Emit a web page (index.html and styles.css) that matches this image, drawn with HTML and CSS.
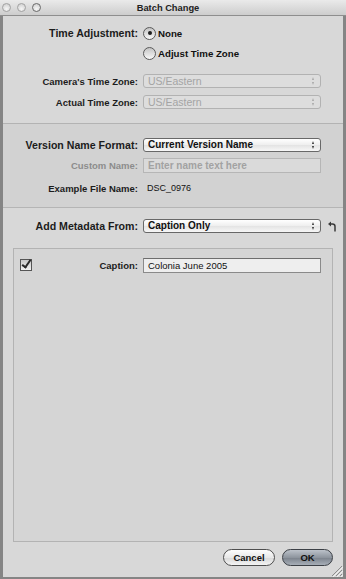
FILE: index.html
```html
<!DOCTYPE html>
<html lang="en">
<head>
    <meta charset="UTF-8">
    <meta name="viewport" content="width=device-width, initial-scale=1.0">
    <title>Batch Change</title>
    <link rel="stylesheet" href="styles.css">
</head>
<body>
    <div class="window">
        <div class="titlebar">
            <div class="lights">
                <span class="light"></span>
                <span class="light"></span>
                <span class="light light-zoom"></span>
            </div>
            <div class="title">Batch Change</div>
        </div>

        <div class="section section-time">
            <div class="row row-big">
                <div class="label">Time Adjustment:</div>
                <label class="radio"><span class="radio-dot on"></span>None</label>
            </div>
            <div class="row row-big row-radio2">
                <div class="label"></div>
                <label class="radio"><span class="radio-dot"></span>Adjust Time Zone</label>
            </div>
            <div class="row row-small row-camera">
                <div class="label">Camera's Time Zone:</div>
                <div class="popup disabled">US/Eastern<span class="arrows"></span></div>
            </div>
            <div class="row row-small row-actual">
                <div class="label">Actual Time Zone:</div>
                <div class="popup disabled">US/Eastern<span class="arrows"></span></div>
            </div>
        </div>

        <div class="section section-name">
            <div class="row row-big">
                <div class="label">Version Name Format:</div>
                <div class="popup">Current Version Name<span class="arrows"></span></div>
            </div>
            <div class="row row-small row-custom">
                <div class="label dim">Custom Name:</div>
                <div class="field disabled">Enter name text here</div>
            </div>
            <div class="row row-small row-example">
                <div class="label">Example File Name:</div>
                <div class="value">DSC_0976</div>
            </div>
        </div>

        <div class="section section-meta">
            <div class="row row-big">
                <div class="label">Add Metadata From:</div>
                <div class="popup">Caption Only<span class="arrows"></span></div>
                <svg class="revert" width="8" height="11" viewBox="0 0 8 11">
                    <path d="M3 0.5 L0 3 L3 5.5 Z" fill="#3a3a3a"/>
                    <path d="M2.5 3 H4.5 Q7 3 7 5.5 V10.5" fill="none" stroke="#3a3a3a" stroke-width="1.5"/>
                </svg>
            </div>
            <div class="box">
                <div class="row row-small row-caption">
                    <div class="label label-check"><span class="check"></span>Caption:</div>
                    <div class="field">Colonia June 2005</div>
                </div>
            </div>
            <div class="buttons">
                <button class="btn btn-cancel">Cancel</button>
                <button class="btn btn-default">OK</button>
            </div>
            <svg class="grip" width="12" height="12" viewBox="0 0 12 12">
                <path d="M11 1 L1 11 M11 5 L5 11 M11 9 L9 11" stroke="#8c8c8c" stroke-width="1"/>
                <path d="M12 2 L2 12 M12 6 L6 12 M12 10 L10 12" stroke="#f0f0f0" stroke-width="1"/>
            </svg>
        </div>
    </div>
</body>
</html>
```

FILE: styles.css
```css
html, body {
    margin: 0;
    padding: 0;
}
body {
    font-family: "Liberation Sans", Arial, sans-serif;
    color: #111;
    background: #7a7a7a;
}
.window {
    width: 346px;
    height: 579px;
    box-sizing: border-box;
    border: 3px solid #858585;
    border-top: 0;
    border-bottom-width: 2px;
    background-color: #d8d8d8;
    display: flex;
    flex-direction: column;
}
.titlebar {
    height: 15px;
    flex: none;
    display: flex;
    align-items: center;
    background: linear-gradient(#eaeaea, #cdcdcd);
    border-bottom: 1px solid #8e8e8e;
    margin: 0 -3px;
}
.lights {
    display: flex;
    gap: 6px;
    padding-left: 2px;
    width: 43px;
}
.light {
    width: 7px;
    height: 7px;
    border-radius: 50%;
    border: 1px solid #a2a2a2;
    background: radial-gradient(circle at 50% 70%, #f6f6f6, #cbcbcb);
}
.light-zoom {
    border-color: #6a6a6a;
}
.title {
    flex: 1;
    text-align: center;
    font-size: 9.3px;
    font-weight: bold;
    color: #222;
    margin-right: 55px;
}
.section {
    flex: none;
    box-sizing: border-box;
}
.section-time {
    height: 108px;
    padding-top: 9px;
    border-bottom: 1px solid #b3b3b3;
}
.section-name {
    height: 84px;
    padding-top: 13px;
    background-color: #d2d2d2;
    border-bottom: 1px solid #b5b5b5;
}
.section-meta {
    flex: 1;
    padding-top: 10px;
    display: flex;
    flex-direction: column;
    position: relative;
}
.row {
    display: grid;
    grid-template-columns: 135px 178px auto;
    column-gap: 5px;
    align-items: center;
    height: 16px;
}
.row-radio2 {
    margin-top: 4px;
}
.row-camera {
    margin-top: 12px;
}
.row-actual {
    margin-top: 5px;
}
.row-custom {
    margin-top: 4px;
}
.row-example {
    margin-top: 7px;
}
.label {
    text-align: right;
    white-space: nowrap;
    font-weight: bold;
    color: #1c1c1c;
}
.row-big .label {
    font-size: 10.6px;
}
.row-small .label {
    font-size: 9.5px;
}
.label.dim {
    color: #8c8c8c;
}
.radio {
    display: flex;
    align-items: center;
    gap: 2px;
    font-size: 9.7px;
    font-weight: bold;
    color: #111;
}
.radio-dot {
    width: 11px;
    height: 11px;
    border-radius: 50%;
    border: 1px solid #5a5a5a;
    background: linear-gradient(#c4c4c4, #f8f8f8);
    position: relative;
}
.radio-dot.on::after {
    content: "";
    position: absolute;
    left: 3.5px;
    top: 3.5px;
    width: 4px;
    height: 4px;
    border-radius: 50%;
    background: #1e1e1e;
}
.popup {
    position: relative;
    height: 14px;
    box-sizing: border-box;
    border: 1px solid #686868;
    border-radius: 3px;
    background: linear-gradient(#ffffff, #eeeeee 50%, #e3e3e3 51%, #f7f7f7);
    font-size: 10px;
    font-weight: bold;
    line-height: 12px;
    padding-left: 4px;
    color: #111;
}
.popup.disabled {
    border-color: #b2b2b2;
    background: #dddddd;
    color: #a4a4a4;
    font-weight: normal;
    font-size: 10.5px;
}
.arrows {
    position: absolute;
    right: 7px;
    top: 2px;
    width: 0;
    height: 8px;
}
.arrows::before,
.arrows::after {
    content: "";
    position: absolute;
    left: -1.5px;
    border-left: 1.5px solid transparent;
    border-right: 1.5px solid transparent;
}
.arrows::before {
    top: 0;
    border-bottom: 3px solid #333;
}
.arrows::after {
    bottom: 0;
    border-top: 3px solid #333;
}
.popup.disabled .arrows::before {
    border-bottom-color: #a8a8a8;
}
.popup.disabled .arrows::after {
    border-top-color: #a8a8a8;
}
.field {
    height: 15px;
    box-sizing: border-box;
    border: 1px solid #8a8a8a;
    border-top-color: #6e6e6e;
    background: #eeeeee;
    font-size: 9.5px;
    line-height: 13px;
    padding-left: 4px;
    color: #111;
}
.field.disabled {
    border-color: #b6b6b6;
    background: #dadada;
    color: #a2a2a2;
    font-weight: bold;
    font-size: 10px;
}
.value {
    font-size: 9px;
    padding-left: 4px;
    color: #111;
}
.revert {
    margin-left: 2px;
}
.box {
    margin: 14px 10px 0 10px;
    height: 294px;
    box-sizing: border-box;
    border: 1px solid #b3b3b3;
    background-color: #d5d5d5;
    padding-top: 8px;
}
.row-caption {
    grid-template-columns: 124px 178px;
}
.label-check {
    display: flex;
    justify-content: space-between;
    align-items: center;
    padding-left: 6px;
}
.check {
    width: 10px;
    height: 10px;
    border: 1px solid #555;
    background: linear-gradient(#c8c8c8, #f2f2f2);
    position: relative;
}
.check::after {
    content: "";
    position: absolute;
    left: 3px;
    top: -2px;
    width: 3px;
    height: 8px;
    border-right: 2px solid #2a2a2a;
    border-bottom: 2px solid #2a2a2a;
    transform: rotate(35deg);
}
.buttons {
    display: flex;
    justify-content: flex-end;
    gap: 7px;
    margin-top: 7px;
    padding-right: 10px;
}
.btn {
    height: 17px;
    border-radius: 9px;
    border: 1px solid #4e4e4e;
    font-family: inherit;
    font-size: 9.5px;
    font-weight: bold;
    color: #111;
    padding: 0;
    background: linear-gradient(#fdfdfd, #e8e8e8 50%, #d8d8d8 51%, #f4f4f4);
}
.btn-cancel {
    width: 52px;
}
.btn-default {
    width: 51px;
    background: linear-gradient(#bcc2ca, #8e959e 50%, #7a818b 51%, #a7aeb7);
    border-color: #3c4046;
}
.grip {
    position: absolute;
    right: 0;
    bottom: 0;
}
```
